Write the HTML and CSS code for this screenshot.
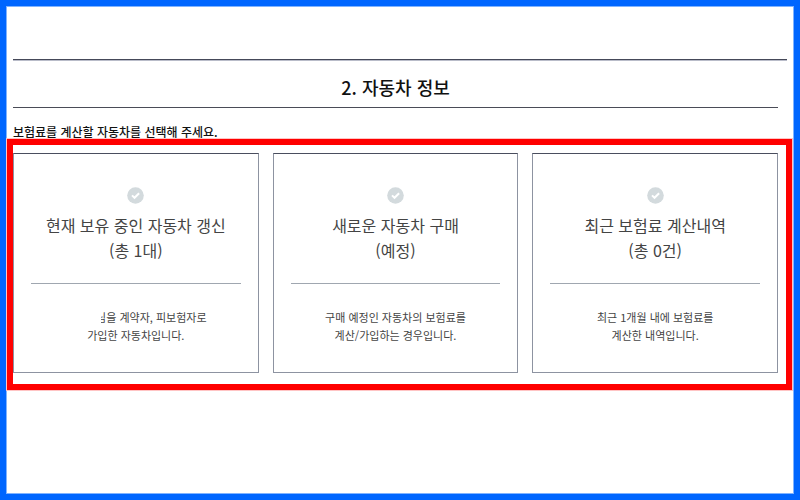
FILE: index.html
```html
<!DOCTYPE html>
<html lang="ko">
<head>
<meta charset="utf-8">
<meta name="viewport" content="width=device-width, initial-scale=1">
<title>자동차 정보</title>
<link rel="stylesheet" href="styles.css">
</head>
<body>
<main class="page">
  <header class="heading">
    <h1 class="title">2. 자동차 정보</h1>
  </header>
  <p class="prompt" id="prompt">보험료를 계산할 자동차를 선택해 주세요.</p>
  <div class="highlight">
    <div class="cards" role="group" aria-labelledby="prompt">
      <button class="card" type="button">
        <svg class="check" viewBox="0 0 17 17" aria-hidden="true"><circle cx="8.5" cy="8.5" r="8.3"/><path d="M5 8.4l2.5 2.4 4.6-4.6"/></svg>
        <span class="name">현재 보유 중인 자동차 갱신<br>(총 1대)</span>
        <span class="note"><span class="redacted"></span>님을 계약자, 피보험자로<br>가입한 자동차입니다.</span>
      </button>
      <button class="card" type="button">
        <svg class="check" viewBox="0 0 17 17" aria-hidden="true"><circle cx="8.5" cy="8.5" r="8.3"/><path d="M5 8.4l2.5 2.4 4.6-4.6"/></svg>
        <span class="name">새로운 자동차 구매<br>(예정)</span>
        <span class="note">구매 예정인 자동차의 보험료를<br>계산/가입하는 경우입니다.</span>
      </button>
      <button class="card" type="button">
        <svg class="check" viewBox="0 0 17 17" aria-hidden="true"><circle cx="8.5" cy="8.5" r="8.3"/><path d="M5 8.4l2.5 2.4 4.6-4.6"/></svg>
        <span class="name">최근 보험료 계산내역<br>(총 0건)</span>
        <span class="note">최근 1개월 내에 보험료를<br>계산한 내역입니다.</span>
      </button>
    </div>
  </div>
</main>
</body>
</html>
```
FILE: styles.css
```css
* {
  box-sizing: border-box;
}

body {
  margin: 0;
  background: #fff;
  color: #111;
  font-family: "Noto Sans CJK KR", "Noto Sans", sans-serif;
}

.page {
  min-height: 100vh;
  padding: 53px 6px 0;
  border: 6px solid #0066ff;
  box-shadow: inset 0 0 0 1px #80b3ff;
}

.heading {
  margin: 0 1px;
  padding-right: 9px;
  border-top: 1px solid #454959;
  box-shadow: inset 0 1px #b9bcc9;
}

.title {
  margin: 0;
  padding: 13px 0 6px;
  border-bottom: 1px solid #4a4c57;
  font-size: 18px;
  font-weight: 500;
  line-height: 28px;
  text-align: center;
}

.prompt {
  margin: 14px 1px 0;
  font-size: 12px;
  font-weight: 500;
  line-height: 20px;
}

/* Frame drawn round the three choices */
.highlight {
  position: relative;
  margin: -3px -4px 0 -5px;
  padding: 8px 8px 11px 0;
  border: 6px solid #f00;
  box-shadow: 0 0 0 1px #ffc4c4;
}

.cards {
  display: grid;
  grid-template-columns: repeat(3, 1fr);
  gap: 14px;
}

.card {
  display: flex;
  flex-direction: column;
  align-items: stretch;
  margin: 0;
  padding: 33px 17px 28px;
  border: 1px solid #8d93a1;
  border-top-color: #4a4e5e;
  background: #fff;
  color: #444;
  font-family: inherit;
  text-align: center;
}

.check {
  align-self: center;
  width: 17px;
  height: 17px;
  fill: #d3dadd;
}

.check path {
  fill: none;
  stroke: #fff;
  stroke-width: 2;
}

.name {
  padding: 9px 0 20px;
  border-bottom: 1px solid #a0a7b0;
  font-size: 16px;
  line-height: 25px;
}

.note {
  padding-top: 24px;
  font-size: 11px;
  line-height: 18px;
}

/* Blank patch over the customer's name and part of the next letter */
.redacted {
  display: inline-block;
  position: relative;
  width: 36px;
  height: 14px;
  margin-right: -5px;
  background: #fff;
  vertical-align: middle;
}
```
